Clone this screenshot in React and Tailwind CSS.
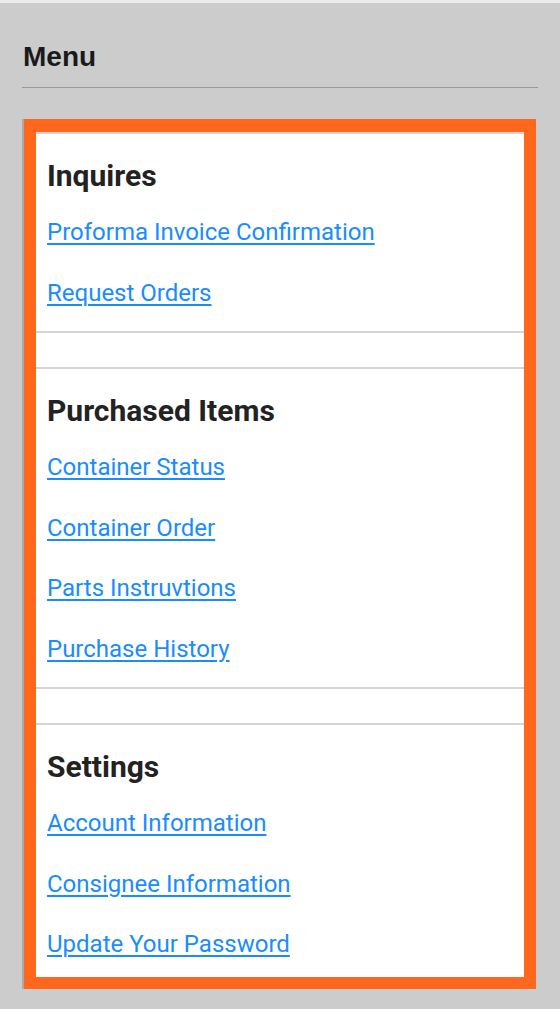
import React from 'react';

const sections = [
  { title: 'Inquires', links: ['Proforma Invoice Confirmation', 'Request Orders'] },
  { title: 'Purchased Items', links: ['Container Status', 'Container Order', 'Parts Instruvtions', 'Purchase History'] },
  { title: 'Settings', links: ['Account Information', 'Consignee Information', 'Update Your Password'] },
];

function MenuSection({ title, links, last }) {
  return (
    <div className={`border-t-2 border-[#d4d4d4] px-[11px] pt-[24px] ${last ? 'pb-[16px]' : 'border-b-2 pb-[22px]'}`}>
      <h2 className="text-[30px] leading-[36px] font-bold text-[#222] mb-[22px]">{title}</h2>
      <div className="flex flex-col gap-[28px]">
        {links.map((link) => (
          <a key={link} href="#" className="text-[24px] leading-[32.5px] text-[#1a8cff] underline underline-offset-[3px] decoration-[1.5px] w-fit">
            {link}
          </a>
        ))}
      </div>
    </div>
  );
}

export default function App() {
  return (
    <div className="min-h-[1009px] bg-[#cccccc] border-t-[3px] border-[#ececec] px-[22px] pb-[22px]" style={{ fontFamily: 'Roboto, "Liberation Sans", sans-serif' }}>
      <div className="pt-[38px] pb-[14px] border-b border-[#999]">
        <h1 className="text-[28px] leading-[32px] font-bold text-[#1a1a1a] pl-[1px]" style={{ fontFamily: '"Liberation Sans", Arial, sans-serif' }}>
          Menu
        </h1>
      </div>
      <div className="mt-[31px] ml-[2px] mr-[2px] border-[12px] border-t-[13px] border-[#ff671d] bg-white shadow-[-2px_0_0_#aaaaaa]">
        {sections.map((s, i) => (
          <React.Fragment key={s.title}>
            {i > 0 && <div className="h-[34px]" />}
            <MenuSection title={s.title} links={s.links} last={i === sections.length - 1} />
          </React.Fragment>
        ))}
      </div>
    </div>
  );
}
